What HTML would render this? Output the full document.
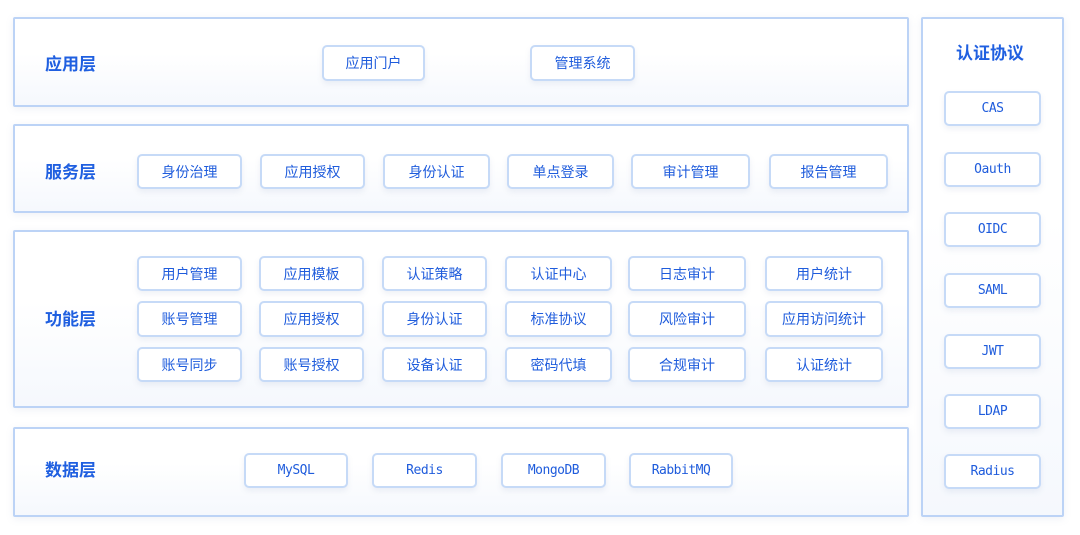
<!DOCTYPE html><html><head><meta charset="utf-8"><style>
body{margin:0;width:1080px;height:535px;background:#fff;position:relative;overflow:hidden;font-family:"Liberation Sans","Noto Sans CJK SC",sans-serif;color:#1f5fe0}
.box{position:absolute;border:2px solid #bcd3f6;border-radius:2px;background:linear-gradient(#fff 40%,#f5f8fd);box-shadow:0 2px 8px rgba(120,140,180,.12);box-sizing:border-box}
.lb{position:absolute;font-size:17px;font-weight:bold;color:#1f5fe0}
.b{position:absolute;border:2px solid #c6daf7;border-radius:5px;background:#fff;box-shadow:0 3px 6px rgba(120,140,180,.12);box-sizing:border-box;display:flex;align-items:center;justify-content:center;font-size:14px;color:#1f5cdc}
.m{font-family:"DejaVu Sans Mono","Liberation Mono",monospace;font-size:13px;letter-spacing:-0.5px}
</style></head><body>
<div class="box" style="left:13px;top:17px;width:896px;height:90px"></div>
<div class="box" style="left:13px;top:124px;width:896px;height:89px"></div>
<div class="box" style="left:13px;top:230px;width:896px;height:178px"></div>
<div class="box" style="left:13px;top:427px;width:896px;height:90px"></div>
<div class="box" style="left:921px;top:17px;width:143px;height:500px"></div>
<div class="lb" style="left:45px;top:50px">应用层</div>
<div class="lb" style="left:45px;top:158px">服务层</div>
<div class="lb" style="left:45px;top:305px">功能层</div>
<div class="lb" style="left:45px;top:456px">数据层</div>
<div class="lb" style="left:956px;top:39px">认证协议</div>
<div class="b" style="left:322px;top:45px;width:103px;height:36px">应用门户</div>
<div class="b" style="left:530px;top:45px;width:105px;height:36px">管理系统</div>
<div class="b" style="left:137px;top:154px;width:105px;height:35px">身份治理</div>
<div class="b" style="left:260px;top:154px;width:105px;height:35px">应用授权</div>
<div class="b" style="left:383px;top:154px;width:107px;height:35px">身份认证</div>
<div class="b" style="left:507px;top:154px;width:107px;height:35px">单点登录</div>
<div class="b" style="left:631px;top:154px;width:119px;height:35px">审计管理</div>
<div class="b" style="left:769px;top:154px;width:119px;height:35px">报告管理</div>
<div class="b" style="left:137px;top:256px;width:105px;height:35px">用户管理</div>
<div class="b" style="left:259px;top:256px;width:105px;height:35px">应用模板</div>
<div class="b" style="left:382px;top:256px;width:105px;height:35px">认证策略</div>
<div class="b" style="left:505px;top:256px;width:107px;height:35px">认证中心</div>
<div class="b" style="left:628px;top:256px;width:118px;height:35px">日志审计</div>
<div class="b" style="left:765px;top:256px;width:118px;height:35px">用户统计</div>
<div class="b" style="left:137px;top:301px;width:105px;height:36px">账号管理</div>
<div class="b" style="left:259px;top:301px;width:105px;height:36px">应用授权</div>
<div class="b" style="left:382px;top:301px;width:105px;height:36px">身份认证</div>
<div class="b" style="left:505px;top:301px;width:107px;height:36px">标准协议</div>
<div class="b" style="left:628px;top:301px;width:118px;height:36px">风险审计</div>
<div class="b" style="left:765px;top:301px;width:118px;height:36px">应用访问统计</div>
<div class="b" style="left:137px;top:347px;width:105px;height:35px">账号同步</div>
<div class="b" style="left:259px;top:347px;width:105px;height:35px">账号授权</div>
<div class="b" style="left:382px;top:347px;width:105px;height:35px">设备认证</div>
<div class="b" style="left:505px;top:347px;width:107px;height:35px">密码代填</div>
<div class="b" style="left:628px;top:347px;width:118px;height:35px">合规审计</div>
<div class="b" style="left:765px;top:347px;width:118px;height:35px">认证统计</div>
<div class="b m" style="left:244px;top:453px;width:104px;height:35px">MySQL</div>
<div class="b m" style="left:372px;top:453px;width:105px;height:35px">Redis</div>
<div class="b m" style="left:501px;top:453px;width:105px;height:35px">MongoDB</div>
<div class="b m" style="left:629px;top:453px;width:104px;height:35px">RabbitMQ</div>
<div class="b m" style="left:944px;top:91px;width:97px;height:35px">CAS</div>
<div class="b m" style="left:944px;top:152px;width:97px;height:35px">Oauth</div>
<div class="b m" style="left:944px;top:212px;width:97px;height:35px">OIDC</div>
<div class="b m" style="left:944px;top:273px;width:97px;height:35px">SAML</div>
<div class="b m" style="left:944px;top:334px;width:97px;height:35px">JWT</div>
<div class="b m" style="left:944px;top:394px;width:97px;height:35px">LDAP</div>
<div class="b m" style="left:944px;top:454px;width:97px;height:35px">Radius</div>
</body></html>
